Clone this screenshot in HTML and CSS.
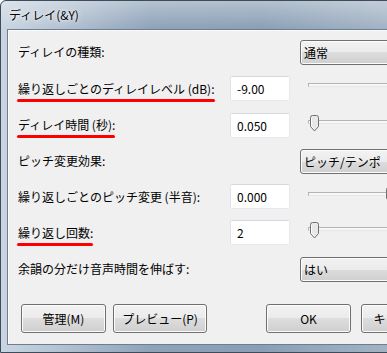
FILE: index.html
```html
<!DOCTYPE html>
<html lang="ja">
<head>
  <meta charset="UTF-8" />
  <title>ディレイ</title>
  <link rel="stylesheet" href="styles.css">
</head>
<body>
  <div class="window">
    <div class="titlebar">ディレイ(&amp;Y)</div>
    <div class="client">
      <div class="form">
        <div class="label">ディレイの種類:</div>
        <div class="combo">通常</div>

        <div class="label"><span class="marked">繰り返しごとのディレイレベル (dB):</span></div>
        <div class="field">-9.00</div>
        <div class="slider"><div class="track"></div></div>

        <div class="label"><span class="marked">ディレイ時間 (秒):</span></div>
        <div class="field">0.050</div>
        <div class="slider">
          <div class="track">
            <svg class="thumb" width="11" height="17" viewBox="0 0 11 17"><path d="M1.5 2.5 Q1.5 0.5 3.5 0.5 H7.5 Q9.5 0.5 9.5 2.5 V11.5 L5.5 16 L1.5 11.5 Z" fill="#e8e8e8" stroke="#707070"/><path d="M2.5 3 V11 L5.5 14.5" fill="none" stroke="#fff"/></svg>
          </div>
        </div>

        <div class="label">ピッチ変更効果:</div>
        <div class="combo">ピッチ/テンポ</div>

        <div class="label">繰り返しごとのピッチ変更 (半音):</div>
        <div class="field">0.000</div>
        <div class="slider">
          <div class="track">
            <svg class="thumb mid" width="11" height="17" viewBox="0 0 11 17"><path d="M1.5 2.5 Q1.5 0.5 3.5 0.5 H7.5 Q9.5 0.5 9.5 2.5 V11.5 L5.5 16 L1.5 11.5 Z" fill="#e8e8e8" stroke="#707070"/><path d="M2.5 3 V11 L5.5 14.5" fill="none" stroke="#fff"/></svg>
          </div>
        </div>

        <div class="label"><span class="marked">繰り返し回数:</span></div>
        <div class="field">2</div>
        <div class="slider">
          <div class="track">
            <svg class="thumb" width="11" height="17" viewBox="0 0 11 17"><path d="M1.5 2.5 Q1.5 0.5 3.5 0.5 H7.5 Q9.5 0.5 9.5 2.5 V11.5 L5.5 16 L1.5 11.5 Z" fill="#e8e8e8" stroke="#707070"/><path d="M2.5 3 V11 L5.5 14.5" fill="none" stroke="#fff"/></svg>
          </div>
        </div>

        <div class="label">余韻の分だけ音声時間を伸ばす:</div>
        <div class="combo">はい</div>
      </div>

      <div class="buttons">
        <button class="btn">管理(M)</button>
        <button class="btn wide">プレビュー(P)</button>
        <button class="btn ok">OK</button>
        <button class="btn">キャンセル</button>
      </div>
    </div>
  </div>
</body>
</html>
```

FILE: styles.css
```css
body {
  margin: 0;
  width: 387px;
  height: 353px;
  overflow: hidden;
  font-family: "Noto Sans CJK JP", "Noto Sans", sans-serif;
  font-size: 12px;
  color: #000;
}
.window {
  width: 470px;
  height: 353px;
  box-sizing: border-box;
  border: 1px solid #3e4b5a;
  border-radius: 6px 6px 0 0;
  padding: 0 0 0 6px;
  background:
    linear-gradient(180deg, rgba(255,255,255,0.35) 0, rgba(255,255,255,0) 28px),
    linear-gradient(90deg, #c9d5e1 0, #b3c2d2 60px, #8ea2b8 150px, #8a9fb5 260px, #a3b3c4 387px);
}
.titlebar {
  height: 28px;
  line-height: 28px;
  padding-left: 2px;
  text-shadow: 0 0 6px rgba(255,255,255,0.9), 0 0 3px rgba(255,255,255,0.8);
}
.client {
  background: #f0f0f0;
  border: 1px solid #6f7e8f;
  box-shadow: inset 1px 1px 0 #fbfbfb;
  padding: 4px 0 11px 10px;
}
.form {
  display: grid;
  grid-template-columns: 212px 60px 10px 200px;
  grid-template-rows: 36px 37px 36px 36px 35px 37px 36px;
  align-items: center;
}
.label {
  grid-column: 1;
  white-space: nowrap;
  line-height: 16px;
}
.marked {
  position: relative;
}
.marked::after {
  content: "";
  position: absolute;
  left: -1px;
  right: 0;
  bottom: -5px;
  height: 3px;
  border-radius: 2px;
  background: #f00;
}
.combo {
  grid-column: 4;
  height: 25px;
  line-height: 23px;
  box-sizing: border-box;
  padding-left: 3px;
  border: 1px solid #707070;
  border-radius: 3px;
  box-shadow: inset 0 0 0 1px #fcfcfc;
  background: linear-gradient(180deg, #f2f2f2 0, #ebebeb 50%, #dddddd 50%, #cfcfcf 100%);
  width: 130px;
}
.field {
  grid-column: 2;
  height: 25px;
  line-height: 23px;
  box-sizing: border-box;
  padding-left: 6px;
  background: #fff;
  border: 1px solid;
  border-color: #e2e3ea #e3e9ef #e3e9ef #e2e3ea;
  border-top-color: #d5d8de;
  border-radius: 2px;
}
.slider {
  grid-column: 4;
  align-self: start;
  padding: 13px 0 0 8px;
}
.track {
  position: relative;
  height: 4px;
  box-sizing: border-box;
  border: 1px solid;
  border-color: #b4b4b4 #dadada #e6e6e6 #b4b4b4;
  background: #f7f7f7;
}
.thumb {
  position: absolute;
  top: -6px;
  left: 0;
}
.thumb.mid {
  left: 76px;
}
.buttons {
  display: flex;
  margin: 17px 0 0 3px;
}
.btn {
  width: 85px;
  height: 29px;
  margin: 0 7px 0 0;
  padding: 0;
  font: inherit;
  color: #000;
  border: 1px solid #707070;
  border-radius: 3px;
  box-shadow: inset 0 0 0 1px #fcfcfc;
  background: linear-gradient(180deg, #f2f2f2 0, #ebebeb 50%, #dddddd 50%, #cfcfcf 100%);
  flex: none;
}
.btn.wide {
  width: 94px;
}
.btn.ok {
  margin-left: 52px;
  margin-right: 10px;
}
```
